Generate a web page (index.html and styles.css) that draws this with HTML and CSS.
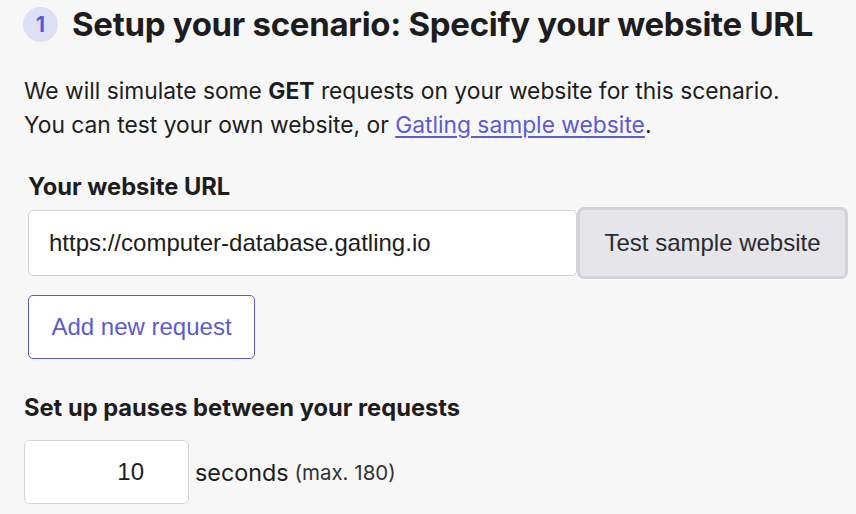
FILE: index.html
```html
<!DOCTYPE html>
<html>
<head>
<meta charset="utf-8">
<link rel="stylesheet" href="styles.css">
</head>
<body>
<div class="page">
  <h1 class="title"><span class="step">1</span><span>Setup your scenario: Specify your website URL</span></h1>
  <p class="intro">We will simulate some <b>GET</b> requests on your website for this scenario.<br>You can test your own website, or <a href="#">Gatling sample website</a>.</p>
  <div class="field">
    <label class="label">Your website URL</label>
    <div class="url-row">
      <input class="url-input" type="text" value="https://computer-database.gatling.io">
      <button class="test-btn">Test sample website</button>
    </div>
    <button class="add-btn">Add new request</button>
  </div>
  <div class="pauses">
    <div class="label">Set up pauses between your requests</div>
    <div class="pause-row">
      <input class="num-input" type="text" value="10">
      <span class="unit">seconds</span>
      <span class="max">(max. 180)</span>
    </div>
  </div>
</div>
</body>
</html>
```
FILE: styles.css
```css
html, body {
  margin: 0;
  background: #f7f7f7;
}
body {
  font-family: Inter, "Noto Sans", sans-serif;
  color: #1d1d20;
  overflow: hidden;
}
.page {
  padding: 4px 0 0 23px;
}
.title {
  display: flex;
  align-items: center;
  gap: 14px;
  margin: 0;
  font-size: 33px;
  font-weight: 700;
  letter-spacing: -0.3px;
  line-height: 41px;
}
.step {
  display: flex;
  align-items: center;
  justify-content: center;
  flex: none;
  width: 35px;
  height: 35px;
  border-radius: 50%;
  background: #dedef5;
  color: #5b5bd6;
  font-size: 21px;
  font-weight: 700;
  letter-spacing: 0;
}
.intro {
  margin: 29px 0 0 1px;
  font-size: 22.8px;
  line-height: 34px;
}
.intro b { font-weight: 700; }
.intro a { color: #5b5bd6; text-decoration: underline; text-underline-offset: 3px; }
.field {
  margin: 31px 0 0 5px;
}
.label {
  display: block;
  font-size: 23.7px;
  font-weight: 700;
  line-height: 28px;
}
.url-row {
  display: flex;
  align-items: center;
  margin-top: 6px;
}
.url-input {
  box-sizing: border-box;
  width: 549px;
  height: 66px;
  padding: 0 20px;
  border: 1px solid #d4d4d8;
  border-radius: 5px;
  background: #fff;
  font-family: "Liberation Sans", Arial, sans-serif;
  font-size: 24px;
  color: #1d1d20;
  outline: none;
}
.test-btn {
  box-sizing: border-box;
  flex: none;
  width: 271px;
  height: 72px;
  border: 3px solid #d2d2d8;
  border-radius: 7px;
  background: #e5e5ea;
  font-family: "Liberation Sans", Arial, sans-serif;
  font-size: 24px;
  color: #2b2b2f;
  padding: 0;
}
.add-btn {
  box-sizing: border-box;
  display: block;
  margin-top: 16px;
  width: 227px;
  height: 64px;
  border: 1px solid #5b5bd6;
  border-radius: 5px;
  background: #fff;
  color: #5b5bd6;
  font-family: "Liberation Sans", Arial, sans-serif;
  font-size: 24px;
  padding: 0;
}
.pauses {
  margin: 35px 0 0 1px;
}
.pause-row {
  display: flex;
  align-items: center;
  margin-top: 18px;
}
.num-input {
  box-sizing: border-box;
  width: 165px;
  height: 64px;
  padding: 0 44px 0 10px;
  border: 1px solid #d4d4d8;
  border-radius: 5px;
  background: #fff;
  text-align: right;
  font-family: "Liberation Sans", Arial, sans-serif;
  font-size: 24px;
  color: #1d1d20;
  outline: none;
}
.unit {
  margin-left: 6px;
  font-size: 23.3px;
}
.max {
  margin-left: 6px;
  font-size: 20.5px;
  color: #333;
}
```
